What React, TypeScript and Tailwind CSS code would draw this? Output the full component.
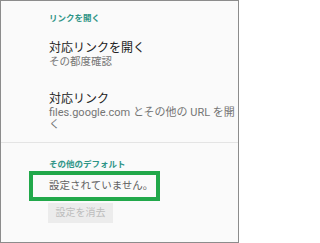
export default function App() {
  return (
    <div
      className="w-[239px] h-[243px] overflow-hidden border border-[#8c8c8c] bg-[#fafafa] text-[#212121]"
      style={{ fontFamily: 'Roboto, "Noto Sans CJK JP", sans-serif' }}
    >
      {/* リンクを開く */}
      <div className="pl-[48px] pr-[2px] pt-[10px]">
        <p className="text-[8.5px] leading-[14px] font-bold text-[#2f9587]">リンクを開く</p>

        <div className="mt-[16px]">
          <p className="text-[12px] leading-[15px]">対応リンクを開く</p>
          <p className="text-[10.5px] leading-[12px] text-[#757575]">その都度確認</p>
        </div>

        <div className="mt-[24px] text-[11px] leading-[12px] text-[#757575]">
          <p className="text-[12px] leading-[15px] text-[#212121]">対応リンク</p>
          <p className="whitespace-nowrap">files.google.com とその他の URL を開</p>
          <p>く</p>
        </div>
      </div>

      <div className="mt-[11px] h-px bg-[#e4e4e4]" />

      {/* その他のデフォルト */}
      <div className="pt-[14px]">
        <p className="pl-[48px] text-[8.5px] leading-[14px] font-bold text-[#2f9587]">その他のデフォルト</p>
        <div className="ml-[28px] w-[131px] h-[30px] border-4 border-[#21a84a] flex items-center pl-[16px]">
          <p className="text-[10.5px] leading-[14px] text-[#616161]">設定されていません。</p>
        </div>
        <div className="ml-[47px] mt-[2px] w-[65px] h-[20px] bg-[#ececec] flex items-center justify-center">
          <span className="text-[10px] leading-[14px] text-[#bdbdbd]">設定を消去</span>
        </div>
      </div>
    </div>
  )
}
